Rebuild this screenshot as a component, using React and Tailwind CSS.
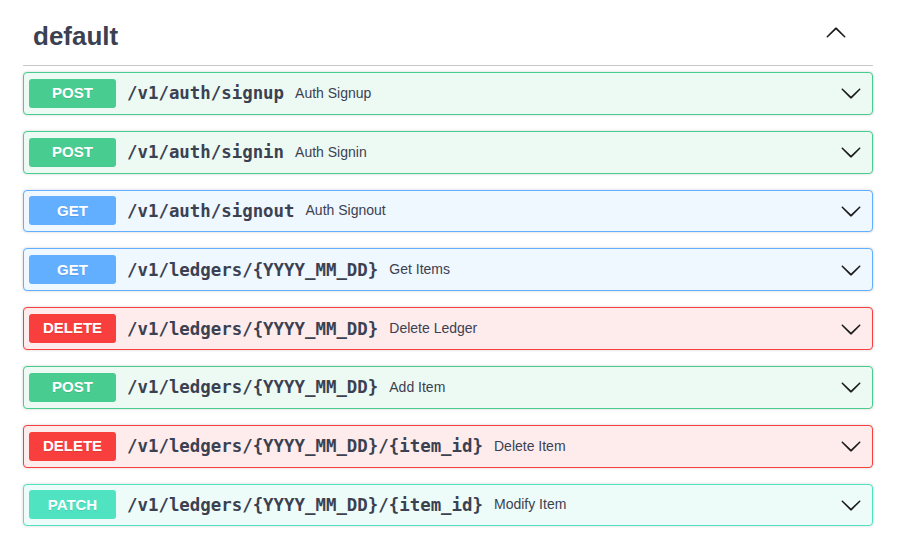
import React from "react";

const styles = {
  POST: { row: "bg-[#edfaf4] border-[#49cc90]", badge: "bg-[#49cc90]" },
  GET: { row: "bg-[#eff7ff] border-[#61affe]", badge: "bg-[#61affe]" },
  DELETE: { row: "bg-[#feecec] border-[#f93e3e]", badge: "bg-[#f93e3e]" },
  PATCH: { row: "bg-[#eefcf9] border-[#50e3c2]", badge: "bg-[#50e3c2]" },
};

const ops = [
  ["POST", "/v1/auth/signup", "Auth Signup"],
  ["POST", "/v1/auth/signin", "Auth Signin"],
  ["GET", "/v1/auth/signout", "Auth Signout"],
  ["GET", "/v1/ledgers/{YYYY_MM_DD}", "Get Items"],
  ["DELETE", "/v1/ledgers/{YYYY_MM_DD}", "Delete Ledger"],
  ["POST", "/v1/ledgers/{YYYY_MM_DD}", "Add Item"],
  ["DELETE", "/v1/ledgers/{YYYY_MM_DD}/{item_id}", "Delete Item"],
  ["PATCH", "/v1/ledgers/{YYYY_MM_DD}/{item_id}", "Modify Item"],
];

function Arrow({ up = false }) {
  return (
    <svg
      width="22"
      height="22"
      viewBox="0 0 20 20"
      className={up ? "rotate-180" : ""}
      fill="#1a1a1a"
    >
      <path d="M17.418 6.109c.272-.268.709-.268.979 0s.271.701 0 .969l-7.908 7.83c-.27.268-.707.268-.979 0l-7.908-7.83c-.27-.268-.27-.701 0-.969.271-.268.709-.268.979 0L10 13.25l7.418-7.141z" />
    </svg>
  );
}

export default function App() {
  return (
    <div className="w-[900px] h-[550px] bg-white pl-[23px] pr-[27px] overflow-hidden font-['Liberation_Sans',Arial,sans-serif] text-[#3b4151]">
      <div className="flex items-center justify-between h-[66px] border-b border-[#c6c7cb] pl-[10px] pr-[26px]">
        <h2 className="mt-[7px] text-[26px] leading-[30px] font-bold">default</h2>
        <div className="mt-[1px]">
          <Arrow up />
        </div>
      </div>
      <div className="mt-[6px] flex flex-col gap-4">
        {ops.map(([method, path, summary], i) => (
          <div
            key={i}
            className={`flex items-center h-[42.8px] border rounded-[4px] pl-[5px] pr-[10px] shadow-[0_0_3px_rgba(0,0,0,0.19)] ${styles[method].row}`}
          >
            <span
              className={`w-[87px] h-[29px] rounded-[3px] flex items-center justify-center text-white text-[15px] font-bold [text-shadow:0_1px_0_rgba(0,0,0,0.1)] ${styles[method].badge}`}
            >
              {method}
            </span>
            <span className="ml-[11px] font-['DejaVu_Sans_Mono',monospace] font-bold text-[17.4px] text-[#3b4151]">
              {path}
            </span>
            <span className="ml-[11px] text-[14px] text-[#3b4151]">{summary}</span>
            <div className="ml-auto flex items-center">
              <Arrow />
            </div>
          </div>
        ))}
      </div>
    </div>
  );
}
